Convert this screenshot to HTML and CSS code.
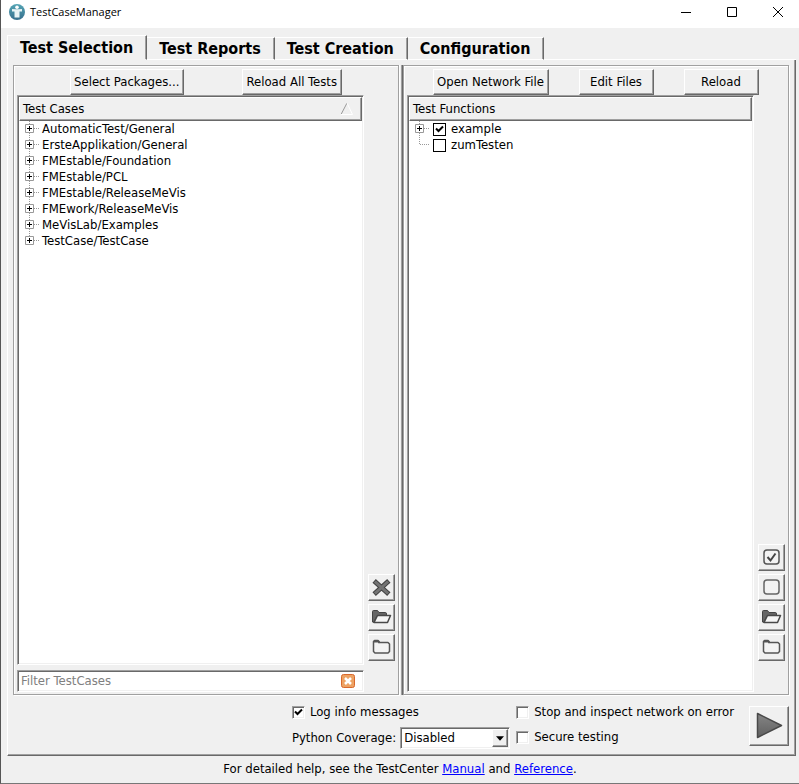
FILE: index.html
```html
<!DOCTYPE html>
<html lang="en">
<head>
<meta charset="utf-8">
<title>TestCaseManager</title>
<link rel="stylesheet" href="styles.css">
</head>
<body>
<svg class="defs" aria-hidden="true">
  <defs>
    <linearGradient id="shade" x1="0" y1="0" x2="0" y2="1"><stop offset="0" stop-color="#858585"/><stop offset="1" stop-color="#606060"/></linearGradient>
    <linearGradient id="teal" x1="0" y1="0" x2="0" y2="1"><stop offset="0" stop-color="#55a5b5"/><stop offset="1" stop-color="#376f8d"/></linearGradient>
    <symbol id="plus" viewBox="0 0 16 16">
      <path d="M5.5 0v3M5.5 12v4M10 7.5h5" stroke="#999" stroke-dasharray="1 1" fill="none"/>
      <path d="M1.5 3.500h8v8h-8z" fill="#fff" stroke="#999"/>
      <path d="M3 7.500h5M5.500 5v5" stroke="#000" fill="none"/>
    </symbol>
    <symbol id="plus-last" viewBox="0 0 16 16">
      <path d="M5.5 0v3M10 7.5h5" stroke="#999" stroke-dasharray="1 1" fill="none"/>
      <path d="M1.5 3.500h8v8h-8z" fill="#fff" stroke="#999"/>
      <path d="M3 7.500h5M5.500 5v5" stroke="#000" fill="none"/>
    </symbol>
    <symbol id="branch" viewBox="0 0 16 16"><path d="M5.500 0v7.500h10.500" stroke="#999" stroke-dasharray="1 1" fill="none"/></symbol>
    <symbol id="folder-open" viewBox="0 0 21 21">
      <path d="M1.500 15V4.500Q1.500 3.500 2.500 3.500H6.500L8 5.500H14.500Q15.500 5.500 15.500 7V9H6L2.500 15.500Z" fill="#666" stroke="#444"/>
      <path d="M6.500 8.500H19.500L16.500 15.500H3Z" fill="#f5f5f5" stroke="#484848" stroke-width="1.500" stroke-linejoin="round"/>
    </symbol>
    <symbol id="folder" viewBox="0 0 21 21">
      <path d="M2.500 6V4.500L3.500 3.500H7L8.500 5.500H17L18.500 7V14.500L17 16H4L2.500 14.500Z" fill="#f3f3f3" stroke="#555" stroke-width="1.500" stroke-linejoin="round"/>
      <path d="M3 4.500H7.500L8.500 6" fill="none" stroke="#555" stroke-width="2"/>
    </symbol>
  </defs>
</svg>
<div class="window">
  <header class="titlebar">
    <svg class="logo" viewBox="0 0 16 16"><circle cx="8" cy="8" r="8" fill="url(#teal)"/><circle cx="8" cy="3.300" r="1.800" fill="#fff"/><path d="M3 5L6.500 5.300H9.500L13 5V7.500H10.500V13.500H5.500V7.500H3Z" fill="#e8f3f5"/></svg>
    <h1>TestCaseManager</h1>
    <div class="caption">
      <button type="button" aria-label="Minimize"><svg viewBox="0 0 12 12"><path d="M1 6.500h10" stroke="#000"/></svg></button>
      <button type="button" aria-label="Maximize"><svg viewBox="0 0 12 12"><path d="M1.500 1.500h9v9h-9z" stroke="#000" fill="none"/></svg></button>
      <button type="button" aria-label="Close"><svg viewBox="0 0 12 12"><path d="M1 1l10 10M11 1L1 11" stroke="#000"/></svg></button>
    </div>
  </header>
  <nav class="tabs">
    <button type="button" class="tab active">Test Selection</button>
    <button type="button" class="tab">Test Reports</button>
    <button type="button" class="tab">Test Creation</button>
    <button type="button" class="tab">Configuration</button>
    <span class="tabline"></span>
  </nav>
  <main class="page">
    <div class="panels">
      <section class="panel">
        <div class="toolbar toolbar-cases">
          <button type="button" class="btn">Select Packages...</button>
          <button type="button" class="btn">Reload All Tests</button>
        </div>
        <div class="content">
          <div class="lists">
            <div class="tree">
              <div class="head"><span>Test Cases</span><svg class="sort" viewBox="0 0 12 12"><path d="M0 11.500L6 0" stroke="#999" fill="none"/><path d="M6 0l5.500 11.500H0" stroke="#fff" fill="none"/></svg></div>
              <ul>
                <li><button type="button" class="expander" aria-label="Expand"><svg><use href="#plus"/></svg></button>AutomaticTest/General</li>
                <li><button type="button" class="expander" aria-label="Expand"><svg><use href="#plus"/></svg></button>ErsteApplikation/General</li>
                <li><button type="button" class="expander" aria-label="Expand"><svg><use href="#plus"/></svg></button>FMEstable/Foundation</li>
                <li><button type="button" class="expander" aria-label="Expand"><svg><use href="#plus"/></svg></button>FMEstable/PCL</li>
                <li><button type="button" class="expander" aria-label="Expand"><svg><use href="#plus"/></svg></button>FMEstable/ReleaseMeVis</li>
                <li><button type="button" class="expander" aria-label="Expand"><svg><use href="#plus"/></svg></button>FMEwork/ReleaseMeVis</li>
                <li><button type="button" class="expander" aria-label="Expand"><svg><use href="#plus"/></svg></button>MeVisLab/Examples</li>
                <li><button type="button" class="expander" aria-label="Expand"><svg><use href="#plus-last"/></svg></button>TestCase/TestCase</li>
              </ul>
            </div>
            <div class="filter">
              <input type="text" placeholder="Filter TestCases" aria-label="Filter TestCases">
              <button type="button" aria-label="Clear filter"><svg viewBox="0 0 14 14"><rect x=".5" y=".5" width="13" height="13" rx="2" fill="#eda263" stroke="#d9682c"/><path d="M4 4l6 6M10 4l-6 6" stroke="#fff" stroke-width="2.500"/></svg></button>
            </div>
          </div>
          <div class="side">
            <button type="button" class="tool" aria-label="Clear"><svg viewBox="0 0 21 21"><path d="M5 5.500l11 10M16 5.500l-11 10" stroke="#444" stroke-width="5" stroke-linecap="square"/><path d="M5 5.500l11 10M16 5.500l-11 10" stroke="#747474" stroke-width="3" stroke-linecap="square"/></svg></button>
            <button type="button" class="tool" aria-label="Expand all"><svg><use href="#folder-open"/></svg></button>
            <button type="button" class="tool" aria-label="Collapse all"><svg><use href="#folder"/></svg></button>
          </div>
        </div>
      </section>
      <div class="splitter"></div>
      <section class="panel">
        <div class="toolbar toolbar-functions">
          <button type="button" class="btn">Open Network File</button>
          <button type="button" class="btn wide">Edit Files</button>
          <button type="button" class="btn wide">Reload</button>
        </div>
        <div class="content">
          <div class="lists">
            <div class="tree">
              <div class="head"><span>Test Functions</span></div>
              <ul>
                <li><button type="button" class="expander" aria-label="Expand"><svg><use href="#plus"/></svg></button><label><input type="checkbox" class="check flat" checked>example</label></li>
                <li><svg class="expander"><use href="#branch"/></svg><label><input type="checkbox" class="check flat">zumTesten</label></li>
              </ul>
            </div>
          </div>
          <div class="side">
            <button type="button" class="tool" aria-label="Check all"><svg viewBox="0 0 21 21"><rect x="3" y="3" width="15" height="14" rx="3" fill="#f3f3f3" stroke="#555" stroke-width="1.500"/><path d="M6.500 10l3 3.500L14.500 6.500" fill="none" stroke="#444" stroke-width="2"/></svg></button>
            <button type="button" class="tool" aria-label="Uncheck all"><svg viewBox="0 0 21 21"><rect x="3" y="3" width="15" height="14" rx="3" fill="#f3f3f3" stroke="#666" stroke-width="1.500"/></svg></button>
            <button type="button" class="tool" aria-label="Expand all"><svg><use href="#folder-open"/></svg></button>
            <button type="button" class="tool" aria-label="Collapse all"><svg><use href="#folder"/></svg></button>
          </div>
        </div>
      </section>
    </div>
    <footer class="options">
      <div class="column">
        <label class="option"><input type="checkbox" class="check" checked>Log info messages</label>
        <div class="coverage">
          <label for="coverage">Python Coverage:</label>
          <div class="combo"><select id="coverage"><option>Disabled</option></select><span class="drop"><svg viewBox="0 0 9 5"><path d="M0 0h9L4.500 5z"/></svg></span></div>
        </div>
      </div>
      <div class="column second">
        <label class="option"><input type="checkbox" class="check">Stop and inspect network on error</label>
        <label class="option"><input type="checkbox" class="check">Secure testing</label>
      </div>
      <button type="button" class="play" aria-label="Run tests"><svg viewBox="0 0 28 28"><path d="M2.500 1.500L26.500 13.500L2.500 25.500Z" fill="url(#shade)" stroke="#484848" stroke-width="1.500" stroke-linejoin="round"/></svg></button>
    </footer>
  </main>
  <p class="help">For detailed help, see the TestCenter <a href="#manual">Manual</a> and <a href="#reference">Reference</a>.</p>
</div>
</body>
</html>
```
FILE: styles.css
```css
* { box-sizing: border-box; }
body {
  margin: 0;
  background: #f0f0f0;
  color: #000;
  font: 13px/16px "DejaVu Sans Condensed", "DejaVu Sans", sans-serif;
}
button, input, select { font: inherit; color: inherit; margin: 0; padding: 0; border: 0; border-radius: 0; background: none; }
svg { display: block; }
ul, p, h1 { margin: 0; padding: 0; }
.defs { position: absolute; width: 0; height: 0; }
.window {
  display: flex;
  flex-direction: column;
  min-height: 100vh;
  border-left: 1px solid #555;
  border-bottom: 1px solid #777;
}
.titlebar { display: flex; align-items: center; height: 28px; padding: 0 0 4px 8px; background: #fff; }
.logo { width: 16px; height: 16px; }
.titlebar h1 { margin-left: 5px; font: 11px/16px "Open Sans", "Noto Sans", sans-serif; }
.caption { display: flex; gap: 4px; margin-left: auto; }
.caption button { width: 42px; height: 24px; display: flex; align-items: center; justify-content: center; }
.caption svg { width: 12px; height: 12px; }
.tabs { display: flex; align-items: flex-end; height: 32px; padding: 0 3px 0 6px; }
.tab {
  height: 23px;
  padding: 0 13px 0 12px;
  font-size: 16px;
  font-weight: bold;
  line-height: 22px;
  border: solid;
  border-width: 1px 1px 1px 0;
  border-color: #fff #696969 #fff #fff;
  box-shadow: inset -1px 0 #a0a0a0;
  white-space: nowrap;
}
.tab.active { height: 25px; border-left-width: 1px; border-bottom-color: #f0f0f0; }
.tabline { flex: 1; border-bottom: 1px solid #fff; }
.page {
  flex: 1;
  display: flex;
  flex-direction: column;
  margin: 0 3px 0 6px;
  padding: 5px 6px 6px 5px;
  border: solid;
  border-width: 0 1px 1px 1px;
  border-color: #696969 #696969 #696969 #fff;
  box-shadow: inset -1px -1px #a0a0a0;
}
.panels { flex: 1; display: flex; }
.panel {
  flex: 1;
  min-width: 0;
  display: flex;
  flex-direction: column;
  padding: 3px 3px 2px;
  border: 1px solid #a0a0a0;
  box-shadow: inset 1px 1px #fff, 1px 1px #fff;
}
.splitter { width: 4px; border-left: 1px solid #fff; border-right: 1px solid #696969; box-shadow: inset -1px 0 #a0a0a0; }
.toolbar { display: flex; height: 26px; }
.toolbar-cases { justify-content: space-between; padding: 0 53px; }
.toolbar-functions { gap: 30px; padding-left: 26px; }
.btn, .tool, .play, .drop, .head {
  border: 1px solid;
  border-color: #fff #696969 #696969 #fff;
  box-shadow: inset -1px -1px #a0a0a0;
}
.btn { padding: 0 4px 0 3px; white-space: nowrap; }
.wide { width: 75px; }
.content { flex: 1; display: flex; gap: 4px; }
.lists { flex: 1; display: flex; flex-direction: column; gap: 5px; min-width: 0; }
.tree, .filter, .combo, .check {
  background: #fff;
  border: 1px solid;
  border-color: #a0a0a0 #fff #fff #a0a0a0;
  box-shadow: inset 1px 1px #696969, inset -1px -1px #f0f0f0;
}
.tree { flex: 1; padding: 1px; }
.head {
  display: flex;
  justify-content: space-between;
  align-items: center;
  height: 24px;
  padding: 0 8px 0 3px;
  background: #f0f0f0;
}
.sort { width: 12px; height: 12px; }
.tree ul { list-style: none; padding-left: 5px; }
.tree li { display: flex; align-items: center; height: 16px; }
.expander { flex: none; width: 16px; height: 16px; margin-right: 2px; }
.expander svg { width: 16px; height: 16px; }
.tree label { display: flex; align-items: center; gap: 5px; margin-left: 1px; }
.check { appearance: none; flex: none; width: 13px; height: 13px; margin: 0; }
.flat { border: 1px solid #000; box-shadow: none; }
.check:checked { background: #fff url("data:image/svg+xml,%3Csvg xmlns='http://www.w3.org/2000/svg' viewBox='0 0 9 9'%3E%3Cpath d='M1 3.500l2.500 2.500L8 1.500' fill='none' stroke='%23000' stroke-width='2'/%3E%3C/svg%3E") center / 9px 9px no-repeat; }
.filter { display: flex; align-items: center; height: 22px; padding-right: 8px; }
.filter input { flex: 1; min-width: 0; padding-left: 3px; outline: 0; }
.filter input::placeholder { color: #808080; opacity: 1; }
.filter svg { width: 14px; height: 14px; }
.side { display: flex; flex-direction: column; justify-content: flex-end; gap: 3px; padding-bottom: 31px; }
.tool { width: 27px; height: 27px; padding: 2px; }
.tool svg { width: 21px; height: 21px; }
.options { display: flex; justify-content: flex-end; padding-top: 9px; }
.column { display: flex; flex-direction: column; gap: 7px; }
.second { gap: 9px; margin: 0 15px 0 6px; }
.option { display: flex; align-items: center; gap: 5px; height: 16px; }
.coverage { display: flex; align-items: center; gap: 4px; }
.combo { display: flex; position: relative; width: 110px; height: 22px; }
.combo select { appearance: none; flex: 1; padding-left: 3px; outline: 0; }
.drop { position: absolute; top: 1px; right: 1px; bottom: 1px; width: 16px; display: flex; align-items: center; justify-content: center; background: #f0f0f0; pointer-events: none; }
.drop svg { width: 8px; height: 5px; }
.play { width: 40px; height: 40px; padding: 5px; margin-top: 2px; }
.play svg { width: 28px; height: 28px; }
.help { height: 27px; line-height: 26px; text-align: center; }
.help a { color: #00f; }
```
